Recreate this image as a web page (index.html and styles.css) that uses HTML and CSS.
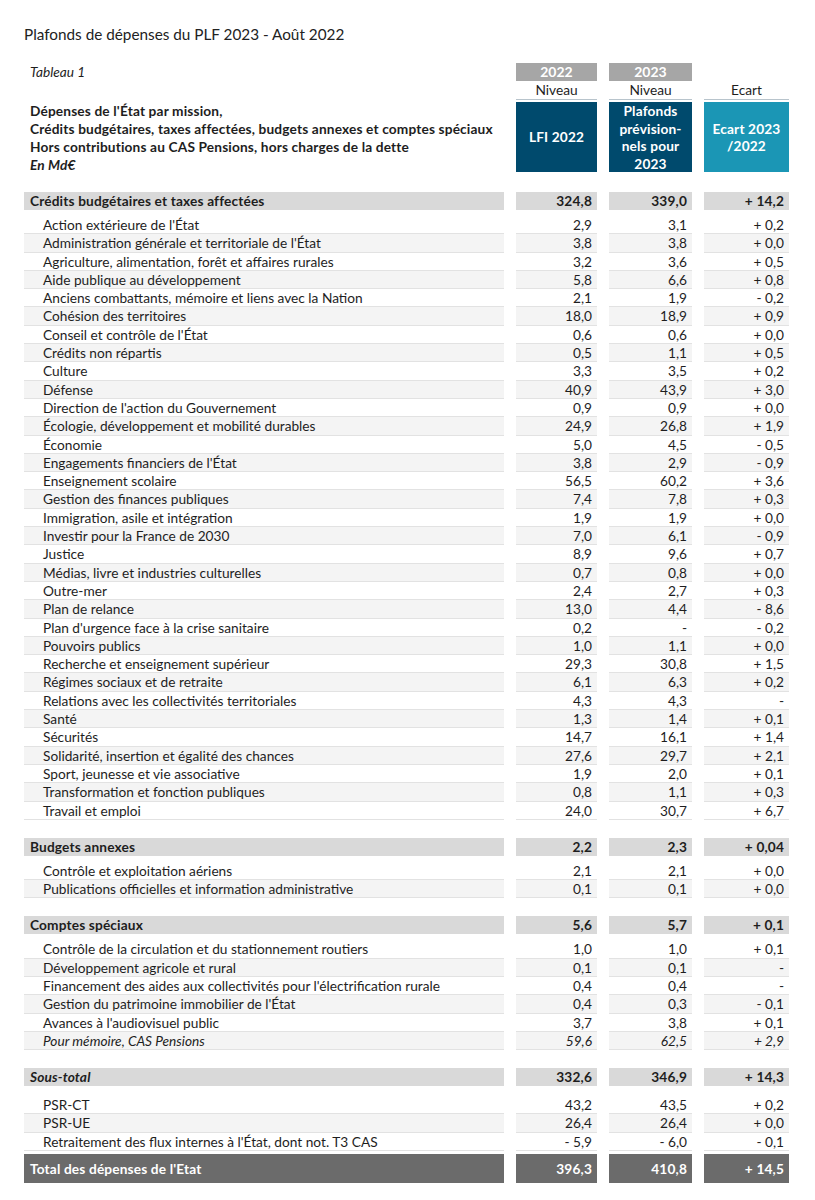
FILE: index.html
```html
<!DOCTYPE html>
<html lang="fr">
<head>
<meta charset="utf-8">
<title>Plafonds de dépenses du PLF 2023</title>
<link rel="stylesheet" href="styles.css">
</head>
<body>
<div class="page">
  <h1 class="title">Plafonds de dépenses du PLF 2023 - Août 2022</h1>

  <div class="row head">
    <div class="lab head-left">
      <div class="tab-name">Tableau 1</div>
      <div class="desc">
        <div>Dépenses de l'État par mission,</div>
        <div>Crédits budgétaires, taxes affectées, budgets annexes et comptes spéciaux</div>
        <div>Hors contributions au CAS Pensions, hors charges de la dette</div>
        <div class="unit">En Md€</div>
      </div>
    </div>
    <div class="lab head-col">
      <div class="year">2022</div>
      <div class="level">Niveau</div>
      <div class="box dark">LFI 2022</div>
    </div>
    <div class="lab head-col">
      <div class="year">2023</div>
      <div class="level">Niveau</div>
      <div class="box dark">Plafonds<br>prévision-<br>nels pour<br>2023</div>
    </div>
    <div class="lab head-col">
      <div class="year blank"></div>
      <div class="level">Ecart</div>
      <div class="box teal">Ecart 2023<br>/2022</div>
    </div>
  </div>

  <section class="section first">
    <div class="row bar"><div class="lab">Crédits budgétaires et taxes affectées</div><div>324,8</div><div>339,0</div><div>+ 14,2</div></div>
    <div class="items">
      <div class="row item"><div class="lab">Action extérieure de l'État</div><div>2,9</div><div>3,1</div><div>+ 0,2</div></div>
      <div class="row item"><div class="lab">Administration générale et territoriale de l'État</div><div>3,8</div><div>3,8</div><div>+ 0,0</div></div>
      <div class="row item"><div class="lab">Agriculture, alimentation, forêt et affaires rurales</div><div>3,2</div><div>3,6</div><div>+ 0,5</div></div>
      <div class="row item"><div class="lab">Aide publique au développement</div><div>5,8</div><div>6,6</div><div>+ 0,8</div></div>
      <div class="row item"><div class="lab">Anciens combattants, mémoire et liens avec la Nation</div><div>2,1</div><div>1,9</div><div>- 0,2</div></div>
      <div class="row item"><div class="lab">Cohésion des territoires</div><div>18,0</div><div>18,9</div><div>+ 0,9</div></div>
      <div class="row item"><div class="lab">Conseil et contrôle de l'État</div><div>0,6</div><div>0,6</div><div>+ 0,0</div></div>
      <div class="row item"><div class="lab">Crédits non répartis</div><div>0,5</div><div>1,1</div><div>+ 0,5</div></div>
      <div class="row item"><div class="lab">Culture</div><div>3,3</div><div>3,5</div><div>+ 0,2</div></div>
      <div class="row item"><div class="lab">Défense</div><div>40,9</div><div>43,9</div><div>+ 3,0</div></div>
      <div class="row item"><div class="lab">Direction de l'action du Gouvernement</div><div>0,9</div><div>0,9</div><div>+ 0,0</div></div>
      <div class="row item"><div class="lab">Écologie, développement et mobilité durables</div><div>24,9</div><div>26,8</div><div>+ 1,9</div></div>
      <div class="row item"><div class="lab">Économie</div><div>5,0</div><div>4,5</div><div>- 0,5</div></div>
      <div class="row item"><div class="lab">Engagements financiers de l'État</div><div>3,8</div><div>2,9</div><div>- 0,9</div></div>
      <div class="row item"><div class="lab">Enseignement scolaire</div><div>56,5</div><div>60,2</div><div>+ 3,6</div></div>
      <div class="row item"><div class="lab">Gestion des finances publiques</div><div>7,4</div><div>7,8</div><div>+ 0,3</div></div>
      <div class="row item"><div class="lab">Immigration, asile et intégration</div><div>1,9</div><div>1,9</div><div>+ 0,0</div></div>
      <div class="row item"><div class="lab">Investir pour la France de 2030</div><div>7,0</div><div>6,1</div><div>- 0,9</div></div>
      <div class="row item"><div class="lab">Justice</div><div>8,9</div><div>9,6</div><div>+ 0,7</div></div>
      <div class="row item"><div class="lab">Médias, livre et industries culturelles</div><div>0,7</div><div>0,8</div><div>+ 0,0</div></div>
      <div class="row item"><div class="lab">Outre-mer</div><div>2,4</div><div>2,7</div><div>+ 0,3</div></div>
      <div class="row item"><div class="lab">Plan de relance</div><div>13,0</div><div>4,4</div><div>- 8,6</div></div>
      <div class="row item"><div class="lab">Plan d'urgence face à la crise sanitaire</div><div>0,2</div><div>-</div><div>- 0,2</div></div>
      <div class="row item"><div class="lab">Pouvoirs publics</div><div>1,0</div><div>1,1</div><div>+ 0,0</div></div>
      <div class="row item"><div class="lab">Recherche et enseignement supérieur</div><div>29,3</div><div>30,8</div><div>+ 1,5</div></div>
      <div class="row item"><div class="lab">Régimes sociaux et de retraite</div><div>6,1</div><div>6,3</div><div>+ 0,2</div></div>
      <div class="row item"><div class="lab">Relations avec les collectivités territoriales</div><div>4,3</div><div>4,3</div><div>-</div></div>
      <div class="row item"><div class="lab">Santé</div><div>1,3</div><div>1,4</div><div>+ 0,1</div></div>
      <div class="row item"><div class="lab">Sécurités</div><div>14,7</div><div>16,1</div><div>+ 1,4</div></div>
      <div class="row item"><div class="lab">Solidarité, insertion et égalité des chances</div><div>27,6</div><div>29,7</div><div>+ 2,1</div></div>
      <div class="row item"><div class="lab">Sport, jeunesse et vie associative</div><div>1,9</div><div>2,0</div><div>+ 0,1</div></div>
      <div class="row item"><div class="lab">Transformation et fonction publiques</div><div>0,8</div><div>1,1</div><div>+ 0,3</div></div>
      <div class="row item"><div class="lab">Travail et emploi</div><div>24,0</div><div>30,7</div><div>+ 6,7</div></div>
    </div>
  </section>

  <section class="section">
    <div class="row bar"><div class="lab">Budgets annexes</div><div>2,2</div><div>2,3</div><div>+ 0,04</div></div>
    <div class="items">
      <div class="row item"><div class="lab">Contrôle et exploitation aériens</div><div>2,1</div><div>2,1</div><div>+ 0,0</div></div>
      <div class="row item"><div class="lab">Publications officielles et information administrative</div><div>0,1</div><div>0,1</div><div>+ 0,0</div></div>
    </div>
  </section>

  <section class="section">
    <div class="row bar"><div class="lab">Comptes spéciaux</div><div>5,6</div><div>5,7</div><div>+ 0,1</div></div>
    <div class="items">
      <div class="row item"><div class="lab">Contrôle de la circulation et du stationnement routiers</div><div>1,0</div><div>1,0</div><div>+ 0,1</div></div>
      <div class="row item"><div class="lab">Développement agricole et rural</div><div>0,1</div><div>0,1</div><div>-</div></div>
      <div class="row item"><div class="lab">Financement des aides aux collectivités pour l'électrification rurale</div><div>0,4</div><div>0,4</div><div>-</div></div>
      <div class="row item"><div class="lab">Gestion du patrimoine immobilier de l'État</div><div>0,4</div><div>0,3</div><div>- 0,1</div></div>
      <div class="row item"><div class="lab">Avances à l'audiovisuel public</div><div>3,7</div><div>3,8</div><div>+ 0,1</div></div>
      <div class="row item memo"><div class="lab">Pour mémoire, CAS Pensions</div><div>59,6</div><div>62,5</div><div>+ 2,9</div></div>
    </div>
  </section>

  <section class="section">
    <div class="row bar subtotal"><div class="lab">Sous-total</div><div>332,6</div><div>346,9</div><div>+ 14,3</div></div>
    <div class="items after-sub">
      <div class="row item"><div class="lab">PSR-CT</div><div>43,2</div><div>43,5</div><div>+ 0,2</div></div>
      <div class="row item"><div class="lab">PSR-UE</div><div>26,4</div><div>26,4</div><div>+ 0,0</div></div>
      <div class="row item"><div class="lab">Retraitement des flux internes à l'État, dont not. T3 CAS</div><div>- 5,9</div><div>- 6,0</div><div>- 0,1</div></div>
    </div>
    <div class="row total"><div class="lab">Total des dépenses de l'Etat</div><div>396,3</div><div>410,8</div><div>+ 14,5</div></div>
  </section>
</div>
</body>
</html>
```

FILE: styles.css
```css
* { box-sizing: border-box; }

body {
  margin: 0;
  background: #ffffff;
  color: #1e1e1e;
  font-family: "Lato", "Open Sans", "Liberation Sans", sans-serif;
  font-size: 13.7px;
}

.page {
  padding: 24px 0 0 24px;
}

.title {
  margin: 0;
  font-size: 15.3px;
  font-weight: 400;
  line-height: 20px;
  color: #222;
}

.row {
  display: grid;
  grid-template-columns: 480px 81px 83px 85px;
  column-gap: 12px;
}

.row > div:not(.lab) {
  text-align: right;
  padding-right: 5px;
}

/* header */
.head {
  margin-top: 19px;
}

.head-left {
  padding-left: 6px;
}
.tab-name {
  font-style: italic;
  line-height: 18px;
  margin-bottom: 21px;
}
.desc {
  font-weight: 700;
  line-height: 18px;
  letter-spacing: 0.15px;
}
.desc .unit { font-style: italic; }

.head-col {
  display: flex;
  flex-direction: column;
  text-align: center;
}
.year {
  height: 18px;
  line-height: 18px;
  background: #a6a6a6;
  color: #fff;
  font-weight: 700;
  font-size: 14px;
}
.year.blank { background: transparent; }
.level {
  line-height: 18px;
  border-bottom: 1px solid #b8c4cc;
}
.box {
  margin-top: 2px;
  height: 70px;
  display: flex;
  align-items: center;
  justify-content: center;
  color: #fff;
  font-weight: 700;
  line-height: 17.5px;
  letter-spacing: 0.15px;
  text-align: center;
}
.box.dark { background: #004a6d; }
.box.teal { background: #1b96b5; }

/* sections */
.section { margin-top: 18px; }

.bar > div {
  background: #d9d9d9;
  font-weight: 700;
  height: 18px;
  line-height: 18px;
  letter-spacing: 0.15px;
}
.bar .lab { padding-left: 6px; }

.items { margin-top: 6px; }
.items.after-sub { margin-top: 10px; }

.item > div {
  height: 18.3px;
  line-height: 17.3px;
  border-bottom: 1px solid #e2e2e2;
}
.item .lab { padding-left: 19px; }
.items .item:nth-child(even) > div { background: #f4f4f4; }

.memo > div { font-style: italic; }
.subtotal .lab { font-style: italic; }

.total { margin-top: 3px; }
.total > div {
  background: #6b6b6b;
  color: #fff;
  font-weight: 700;
  height: 29px;
  line-height: 29px;
  letter-spacing: 0.15px;
}
.total .lab { padding-left: 6px; }
```
